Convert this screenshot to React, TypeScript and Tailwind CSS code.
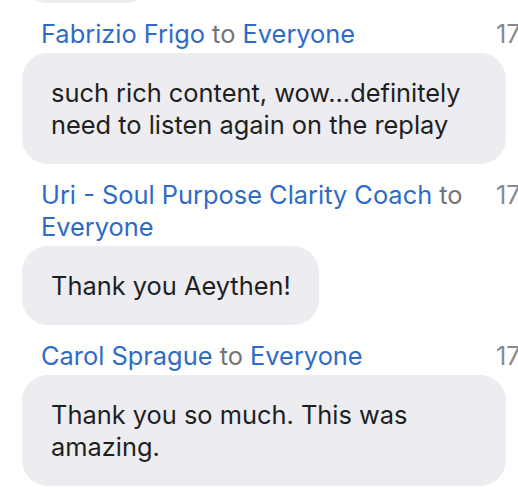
import React from "react";

const font = { fontFamily: "Inter, 'Noto Sans', sans-serif" };

function Header({ name, time }: { name: string; time: string }) {
  return (
    <div className="flex items-start pl-[41px] mt-[15px] mb-[3px] text-[25.4px] leading-[32px]">
      <div className="w-[440px] shrink-0">
        <span className="text-[#2f6bc6]">{name}</span>
        <span className="text-[#737378]"> to </span>
        <span className="text-[#2f6bc6]">Everyone</span>
      </div>
      <div className="ml-[15px] shrink-0 text-[#8a8a8e]">{time}</div>
    </div>
  );
}

function Bubble({ children, full }: { children: React.ReactNode; full?: boolean }) {
  return (
    <div className="pl-[22px]">
      <div
        className={`${full ? "w-[484px]" : "w-fit max-w-[484px]"} rounded-[26px] bg-[#ececf1] pl-[29px] pr-[28px] pt-[24px] pb-[23px] text-[25.4px] leading-[32px] text-[#1f1f22]`}
      >
        {children}
      </div>
    </div>
  );
}

export default function App() {
  return (
    <div className="w-[518px] h-[504px] overflow-hidden bg-white" style={font}>
      <div className="ml-[22px] -mt-[76px] w-[130px] h-[79px] rounded-[26px] bg-[#ececf1]" />
      <Header name="Fabrizio Frigo" time="17:52" />
      <Bubble full>such rich content, wow...definitely need to listen again on the replay</Bubble>
      <Header name="Uri - Soul Purpose Clarity Coach" time="17:52" />
      <Bubble>Thank you Aeythen!</Bubble>
      <Header name="Carol Sprague" time="17:52" />
      <Bubble full>Thank you so much. This was amazing.</Bubble>
    </div>
  );
}
